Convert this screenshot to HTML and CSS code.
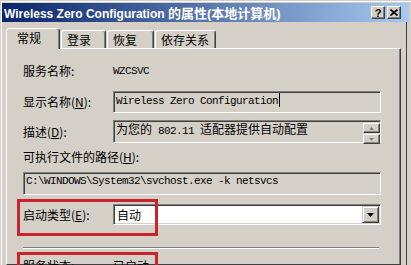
FILE: index.html
```html
<!DOCTYPE html>
<html>
<head>
  <meta charset="utf-8">
  <title>Wireless Zero Configuration 的属性(本地计算机)</title>
  <link rel="stylesheet" href="styles.css">
</head>
<body>
  <div class="window">
    <div class="titlebar">
      <span class="title">Wireless Zero Configuration <span class="title-cjk">的属性(本地计算机)</span></span>
      <div class="caption-buttons">
        <span class="cap-btn help">?</span>
        <span class="cap-btn">
          <svg width="8" height="7" viewBox="0 0 8 7"><path d="M0.5 0.5L7.5 6.5M7.5 0.5L0.5 6.5" stroke="#000" stroke-width="1.6"/></svg>
        </span>
      </div>
    </div>
    <div class="frame">
      <div class="tabs">
        <div class="tab active">常规</div>
        <div class="tab tab-login">登录</div>
        <div class="tab tab-recover">恢复</div>
        <div class="tab tab-deps">依存关系</div>
      </div>
      <div class="panel">
        <div class="row row-name">
          <span class="label">服务名称:</span>
          <span class="value mono">WZCSVC</span>
        </div>
        <div class="row row-display">
          <span class="label">显示名称(<u>N</u>):</span>
          <div class="box mono">Wireless Zero Configuration<span class="caret"></span></div>
        </div>
        <div class="row row-desc">
          <span class="label">描述(<u>D</u>):</span>
          <div class="box desc">
            <span class="desc-text">为您的<span class="half"> 802.11 </span>适配器提供自动配置</span>
            <div class="spin">
              <span class="spin-btn"><svg width="5" height="3" viewBox="0 0 5 3"><path d="M2.5 0L5 3H0Z" fill="#808080"/></svg></span>
              <span class="spin-btn"><svg width="5" height="3" viewBox="0 0 5 3"><path d="M0 0H5L2.5 3Z" fill="#808080"/></svg></span>
            </div>
          </div>
        </div>
        <div class="path-label">可执行文件的路径(<u>H</u>):</div>
        <div class="box path mono">C:\WINDOWS\System32\svchost.exe -k netsvcs</div>
        <div class="row row-startup marked">
          <span class="label">启动类型(<u>E</u>):</span>
          <div class="combo">
            <span class="combo-text">自动</span>
            <span class="drop-btn"><svg width="7" height="4" viewBox="0 0 7 4"><path d="M0 0H7L3.5 4Z" fill="#000"/></svg></span>
          </div>
        </div>
        <div class="separator"></div>
        <div class="row row-status marked">
          <span class="label">服务状态:</span>
          <span class="value">已启动</span>
        </div>
      </div>
    </div>
  </div>
</body>
</html>
```

FILE: styles.css
```css
* {
  box-sizing: border-box;
}
body {
  margin: 0;
  width: 411px;
  height: 265px;
  overflow: hidden;
  background: #d4d0c8;
  font-family: "Noto Sans CJK SC", sans-serif;
  font-size: 12px;
  line-height: 16px;
  color: #000;
}
.window {
  height: 265px;
  padding: 3px 0 0 2px;
  box-shadow: inset 1px 1px #d4d0c8, inset 2px 2px #fff;
}
.titlebar {
  height: 19px;
  margin-right: 2px;
  padding: 0 8px 0 2px;
  display: flex;
  align-items: center;
  justify-content: space-between;
  background: linear-gradient(to right, #0a246a, #a6caf0);
  color: #fff;
  font: bold 12px "Liberation Sans", "Noto Sans CJK SC", sans-serif;
}
.title-cjk {
  font-size: 13px;
}
.caption-buttons {
  display: flex;
  gap: 2px;
}
.cap-btn {
  width: 14px;
  height: 13px;
  display: flex;
  align-items: center;
  justify-content: center;
  background: #d4d0c8;
  border: 1px solid;
  border-color: #fff #404040 #404040 #fff;
  box-shadow: inset -1px -1px #808080;
  color: #000;
  font: bold 11px "Liberation Sans", sans-serif;
}
.frame {
  height: 243px;
  margin-right: 4px;
  padding: 6px 5px 0 4px;
  border-right: 1px solid #404040;
}
.tabs {
  position: relative;
  z-index: 1;
  height: 20px;
  display: flex;
  align-items: flex-end;
}
.tab {
  height: 18px;
  padding: 1px 0 0 5px;
  background: #d4d0c8;
  border: 1px solid;
  border-color: #fff #404040 transparent #fff;
  border-bottom: none;
  border-radius: 3px 3px 0 0;
  box-shadow: inset -1px 0 #808080;
  line-height: 16px;
}
.tab.active {
  width: 54px;
  height: 21px;
  margin-bottom: -1px;
  padding: 1px 0 0 10px;
}
.tab-login {
  width: 45px;
  margin: 0 1px 0 1px;
}
.tab-recover {
  width: 47px;
  margin-right: 1px;
}
.tab-deps {
  width: 61px;
}
.panel {
  height: 217px;
  padding: 14px 19px 0 16px;
  border: 1px solid;
  border-color: #fff #404040 #404040 #fff;
  box-shadow: inset -1px 0 #808080;
}
.row {
  display: flex;
  align-items: center;
}
.label {
  width: 90px;
  flex: none;
  white-space: nowrap;
}
.mono {
  font-family: "Liberation Mono", "Noto Sans CJK SC", monospace;
  font-size: 11px;
  letter-spacing: -0.6px;
}
.box {
  flex: 1;
  padding: 1px 0 0 0;
  border: 1px solid;
  border-color: #808080 #fff #fff #808080;
  box-shadow: inset 1px 1px #404040, inset -1px -1px #d4d0c8;
  padding-left: 2px;
  line-height: 14px;
  white-space: nowrap;
}
.row-display {
  margin-top: 12px;
}
.row-display .box {
  height: 22px;
}
.caret {
  display: inline-block;
  width: 1px;
  height: 14px;
  margin-left: 1px;
  background: #000;
  vertical-align: -3px;
}
.row-desc {
  margin-top: 7px;
}
.desc {
  height: 23px;
  display: flex;
  justify-content: space-between;
  align-items: flex-start;
  padding-right: 0;
}
.desc-text {
  line-height: 14px;
}
.half {
  font-family: "Liberation Mono", monospace;
  font-size: 11px;
  letter-spacing: -0.6px;
}
.spin {
  width: 17px;
  display: flex;
  flex-direction: column;
  gap: 1px;
  margin-top: 1px;
}
.spin-btn {
  height: 10px;
  display: flex;
  align-items: center;
  justify-content: center;
  background: #d4d0c8;
  border: 1px solid;
  border-color: #fff #404040 #404040 #fff;
  box-shadow: inset -1px -1px #808080;
}
.path-label {
  margin-top: 6px;
}
.path {
  height: 23px;
  margin-top: 7px;
}
.row-startup {
  margin-top: 9px;
}
.combo {
  flex: 1;
  height: 21px;
  display: flex;
  align-items: center;
  justify-content: space-between;
  padding-left: 3px;
  background: #fff;
  border: 1px solid;
  border-color: #808080 #fff #fff #808080;
  box-shadow: inset 1px 1px #404040, inset -1px -1px #d4d0c8;
}
.drop-btn {
  width: 17px;
  height: 17px;
  margin-right: 1px;
  display: flex;
  align-items: center;
  justify-content: center;
  background: #d4d0c8;
  border: 1px solid;
  border-color: #d4d0c8 #404040 #404040 #d4d0c8;
  box-shadow: inset 1px 1px #fff, inset -1px -1px #808080;
}
.separator {
  height: 2px;
  margin: 22px 2px 0 0;
  border-top: 1px solid #808080;
  border-bottom: 1px solid #fff;
}
.row-status {
  margin-top: 9px;
}
.marked {
  position: relative;
}
.marked::after {
  content: "";
  position: absolute;
  left: -6px;
  top: -5px;
  width: 135px;
  height: 31px;
  border: 3px solid #c9232d;
}
.row-status::after {
  top: -6px;
  height: 40px;
}
```
